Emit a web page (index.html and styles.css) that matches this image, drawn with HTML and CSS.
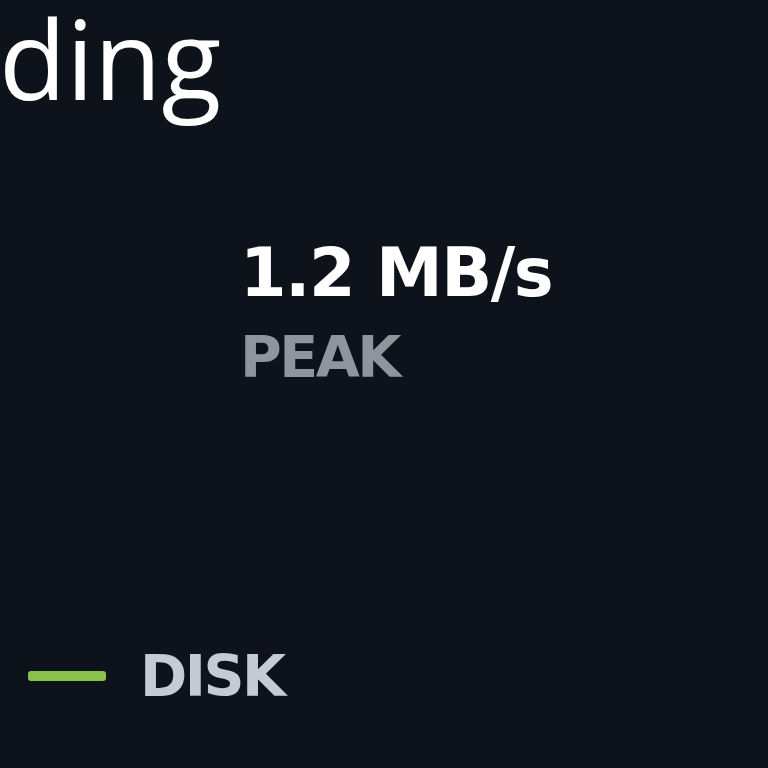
FILE: index.html
```html
<!DOCTYPE html>
<html>
<head>
<meta charset="utf-8">
<link rel="stylesheet" href="styles.css">
</head>
<body>
<div class="page">
  <h1 class="title">ding</h1>
  <div class="stat">
    <div class="value">1.2 MB/s</div>
    <div class="label">PEAK</div>
  </div>
  <div class="legend">
    <span class="swatch"></span>
    <span class="legend-label">DISK</span>
  </div>
</div>
</body>
</html>
```
FILE: styles.css
```css
html, body {
  margin: 0;
  padding: 0;
  background: #0e131b;
  width: 768px;
  height: 768px;
  overflow: hidden;
}
.page {
  display: flex;
  flex-direction: column;
  font-family: "Open Sans", "DejaVu Sans", sans-serif;
}
.title {
  margin: -18px 0 0 -1px;
  font-weight: 400;
  font-size: 110px;
  line-height: 150px;
  color: #ffffff;
  white-space: nowrap;
}
.stat {
  margin: 101px 0 0 240px;
  font-family: "DejaVu Sans", sans-serif;
}
.value {
  font-weight: 700;
  font-size: 67px;
  line-height: 80px;
  letter-spacing: -1.5px;
  color: #ffffff;
}
.label {
  margin-top: 12px;
  font-weight: 700;
  font-size: 57px;
  line-height: 64px;
  letter-spacing: -2.5px;
  color: #8d959d;
}
.legend {
  margin: 254px 0 0 28px;
  display: flex;
  align-items: center;
  gap: 34px;
  font-family: "DejaVu Sans", sans-serif;
}
.swatch {
  width: 78px;
  height: 10px;
  border-radius: 3px;
  background: #88c24a;
}
.legend-label {
  font-weight: 700;
  font-size: 57px;
  letter-spacing: -2.5px;
  color: #c3ccd6;
}
```
